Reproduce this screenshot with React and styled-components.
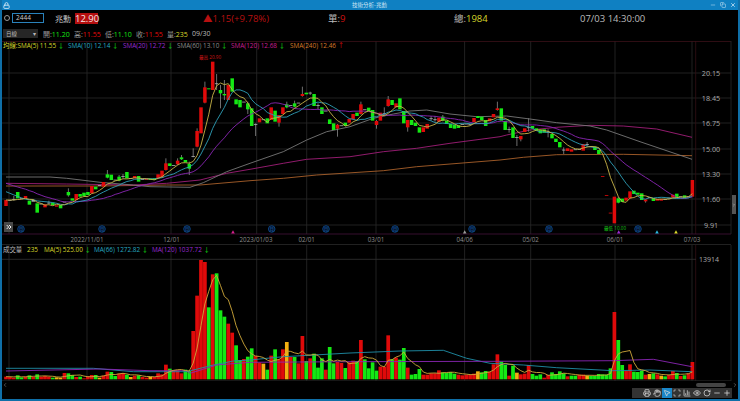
import React from 'react';
import styled, { createGlobalStyle } from 'styled-components';
import { Printer, Hand, MousePointer2, Scan, ChartColumn, Eye, RotateCw, Minus, Plus, Lock, ChevronLeft, ChevronRight, ChevronsRight, X, Copy } from 'lucide-react';

const GlobalStyle = createGlobalStyle`
  html, body {
    margin: 0;
    padding: 0;
    background: #000;
    overflow: hidden;
  }
  * { box-sizing: border-box; }
`;

const RED = '#e00a0a';
const GREEN = '#14e814';
const YELLOW = '#d6d62a';
const FONT = '"Open Sans", "Noto Sans CJK TC", sans-serif';

const Win = styled.div`
  width: 740px;
  height: 401px;
  display: flex;
  flex-direction: column;
  background: #000;
  border: solid #0f6fa8;
  border-width: 0 2px 2px 2px;
  font-family: ${FONT};
  color: #bbb;
  overflow: hidden;
`;

const TitleBar = styled.div`
  height: 10px;
  flex: none;
  margin: 0 -2px;
  padding: 0 4px 0 3px;
  display: grid;
  grid-template-columns: 1fr auto 1fr;
  align-items: center;
  background: #0f80c2;
  color: #cfe6f5;
  font-size: 5.5px;
`;

const WinButtons = styled.div`
  display: flex;
  justify-content: flex-end;
  gap: 4px;
  color: #cfe6f5;
`;

const HeadRow = styled.div`
  height: 16px;
  flex: none;
  display: flex;
  align-items: center;
  font-size: 10px;
  position: relative;
`;

const SearchDot = styled.span`
  width: 6px;
  height: 6px;
  margin: 0 2px 0 2px;
  border: 1px solid #999;
  border-radius: 50%;
`;

const CodeBox = styled.div`
  width: 32px;
  height: 10px;
  padding-left: 3px;
  border: 1px solid #2a82bb;
  font-size: 6.5px;
  line-height: 8px;
  color: #ccc;
`;

const Name = styled.span`
  margin-left: 11px;
  width: 20px;
  font-size: 8px;
  color: #c4c4c4;
`;

const PriceTag = styled.span`
  width: 23px;
  height: 11px;
  background: #b40f0f;
  color: #f4e6e6;
  line-height: 11px;
  text-align: center;
  font-size: 9.5px;
`;

const HeadCell = styled.span`
  width: ${p => p.$w}px;
  color: ${p => p.$c || '#bbb'};
  white-space: nowrap;
  font-size: 9.5px;
`;

const InfoRow = styled.div`
  height: 15px;
  flex: none;
  display: flex;
  align-items: center;
  padding-left: 1px;
  font-size: 7px;
`;

const PeriodSelect = styled.div`
  width: 35px;
  height: 9px;
  margin-right: 5px;
  padding: 0 2px 0 3px;
  display: flex;
  align-items: center;
  justify-content: space-between;
  background: #262626;
  color: #bbb;
  font-size: 5.5px;
`;

const Stat = styled.span`
  width: ${p => p.$w || 31}px;
  color: #999;
  white-space: nowrap;
  b {
    font-weight: 400;
    color: ${p => p.$c};
  }
`;

const Panel = styled.div`
  position: relative;
  flex: none;
  height: ${p => p.$h}px;
`;

const Graph = styled.svg`
  display: block;
  width: 736px;
  height: 100%;
  font-family: ${FONT};
`;

const Legend = styled.div`
  position: absolute;
  top: 0;
  left: 1px;
  height: 9px;
  display: flex;
  align-items: center;
  font-size: 6.4px;
  white-space: nowrap;
`;

const LegendItem = styled.span`
  width: ${p => p.$w}px;
  color: ${p => p.$c};
  i {
    font-style: normal;
    color: ${p => p.$a || GREEN};
  }
`;

const ScrollRow = styled.div`
  height: 7px;
  flex: none;
  display: flex;
  align-items: center;
  justify-content: space-between;
  color: #999;
`;

const ScrollThumb = styled.span`
  width: 30px;
  height: 4px;
  margin-left: auto;
  margin-right: 6px;
  border-radius: 2px;
  background: #444;
`;

const Footer = styled.div`
  height: 11px;
  flex: none;
  display: flex;
  justify-content: flex-end;
  padding: 0 6px 1px 0;
`;

const Tools = styled.div`
  display: flex;
  background: #333;
`;

const ToolBtn = styled.span`
  width: 10px;
  height: 10px;
  display: flex;
  align-items: center;
  justify-content: center;
  color: #ddd;
  background: ${p => (p.$on ? '#1a86c8' : 'transparent')};
`;

const SideHandle = styled.div`
  position: absolute;
  right: 2px;
  top: 154px;
  width: 4px;
  height: 19px;
  display: flex;
  align-items: center;
  justify-content: center;
  background: #555;
  color: #ccc;
`;

const SkipButton = styled.div`
  position: absolute;
  left: 2px;
  top: 181px;
  width: 9px;
  height: 10px;
  display: flex;
  align-items: center;
  justify-content: center;
  background: #4a4a4a;
  color: #eee;
`;

// r/g/d, top, bottom, wick top, wick bottom, all read off the reference as 3x pixels (y = 50 + v / 3)
const candles = [
  ['r',450,468],['d',450,452],['d',448,450,438,452],['g',426,445],['d',445,447],['r',438,445],['g',452,464],['d',450,455],
  ['g',460,488],['d',461,463],['r',463,472],['d',458,460,452,462],['g',458,465],['r',466,470],['g',465,475],['d',455,457],
  ['g',426,436,415,440],['g',445,452],['r',432,450],['g',432,440],['g',428,438],['g',426,435],['r',408,430],['g',410,418],
  ['d',405,407],['r',396,410],['g',373,383,360,385],['g',374,390],['d',389,391],['g',380,392,375,394],['d',378,380,372,385],['g',366,385],
  ['d',384,386],['r',378,385],['g',378,395],['d',387,389],['r',386,390],['g',386,390],['g',385,390],['r',373,385],
  ['r',362,383],['r',340,360,325,362],['g',340,348],['d',345,347],['r',332,343,325,345],['g',322,328,315,330],['g',330,337],['g',342,356,335,375],
  ['d',318,320,295,322],['r',243,290,235,292],['r',172,250],['r',112,158,95,160],['g',115,118],['r',35,120],['d',100,102,72,120],['g',120,130,105,175],
  ['g',132,136,90,150],['r',105,150],['g',85,125],['g',148,163],['g',150,172],['d',155,157],['g',160,178,155,192],['g',175,228],
  ['d',222,224,220,258],['r',205,217],['d',208,210],['g',205,220],['r',172,210],['g',182,215],['r',195,218,195,230],['r',172,192],
  ['g',163,172,155,175],['d',165,167],['g',160,170,152,172],['d',158,160],['r',132,138,110,140],['g',128,133],['d',128,130,125,135],['g',132,168],
  ['d',165,167,160,178],['g',172,192],['d',182,184],['g',208,222],['g',220,240],['r',224,236,222,260],['d',226,228],['g',218,228],
  ['r',207,218],['r',192,208],['g',188,198],['r',163,192,155,194],['d',178,180],['g',173,183],['g',180,212],['r',213,225,210,236],
  ['r',188,212],['d',190,192,172,195],['r',148,168,138,170],['g',150,165],['r',160,172],['g',145,178],['g',183,220],['r',210,232,210,245],
  ['g',210,225],['g',218,228],['g',232,248],['r',232,246],['r',222,236],['d',205,207,198,212],['d',208,210,198,215],['r',203,215],
  ['g',200,212,195,214],['g',212,222],['g',222,234],['g',224,236],['g',226,234],['d',222,224],['d',221,223],['d',222,224],
  ['r',204,216],['g',198,204],['g',200,210],['g',210,228],['r',205,214],['r',192,202],['r',175,180,155,182],['g',175,212],
  ['g',213,240],['d',237,239,230,248],['g',232,264],['d',261,263,255,288],['r',258,268,258,274],['r',235,246],['d',232,234,205,245],['g',228,236],
  ['g',235,242],['g',240,250],['g',238,248],['d',245,247,238,262],['g',252,265],['g',266,276],['g',276,292],['d',299,301,292,312],
  ['r',295,303],['r',298,305],['d',298,300],['d',297,299],['r',282,302],['d',282,284,276,290],['d',289,291],['g',290,300],
  ['g',300,312],['x',378,380],['x',435,437],['x',488,490],['r',440,520],['g',445,458,440,460],['g',446,456],['r',443,452],
  ['r',424,445],['g',422,432],['g',428,434],['g',430,450],['r',448,454,448,458],['d',442,444],['g',445,453],['r',447,452],
  ['r',447,452],['d',447,449],['d',443,445],['r',434,443],['g',431,443],['d',439,441],['g',436,445],['d',439,441],['r',390,440],
];

const BAR = { r: RED, g: GREEN, y: '#f2b010' };
const volume = [
  'r455','r456','r458','g451','g457','r455','g451','r456','g448','r455','r453','r455','g458','y457','y458','r444',
  'g445','g450','r456','g455','r460','r454','r450','g450','y458','r452','r440','g441','g453','r446','r444','g449',
  'y456','r452','g451','r456','r458','y456','r456','r445','r448','r419','g431','r436','r436','r445','g434','g438',
  'r318','r212','r105','r111','g247','r148','g145','g256','g275','r296','r323','g361','g405','r402','g395','g370',
  'r393','r413','y416','g434','r392','g373','r403','r373','y351','r396','g396','r415','r333','g408','r400','g386',
  'g428','g400','r434','g366','g415','r411','r414','g429','r412','r407','g408','r345','g403','g430','g412','g437',
  'r425','r425','r331','g403','r398','g404','g369','r428','g449','g447','g432','r449','r449','r445','r445','r436',
  'g442','g444','g441','g446','r449','r451','r449','r449','r446','y439','g442','g438','r440','r418','r388','g410',
  'g420','r452','g422','y443','r448','r446','r420','g447','g452','g448','r458','r450','g442','g447','g439','g445',
  'r454','g452','g452','r449','r449','y452','g453','g453','g447','g448','g449','g430','r261','g345','g420','r438',
  'r418','g440','g441','g437','r449','y447','g445','r448','y452','g454','r450','r438','g444','r453','g451','r445','r411',
];

const barX = i => 6 + 3.9 * i;
const mainY = v => 50 + v / 3;
const volY = v => 225 + v / 3;
const BASE = 463;

const closes = candles.map(c => (c[0] === 'g' ? c[2] : c[1]));
const priceHistory = [...Array(10).fill(375), ...Array(5).fill(400), ...Array(4).fill(450)];

const sma = (values, n, history) => {
  const all = [...history, ...values];
  const start = history.length;
  return values.map((_, i) => {
    const win = all.slice(Math.max(0, i + start - n + 1), i + start + 1);
    return win.reduce((a, b) => a + b, 0) / win.length;
  });
};

const toPoints = (values, toY) => values.map((v, i) => `${barX(i).toFixed(1)},${toY(v).toFixed(1)}`).join(' ');

// hand traced lines: [3x crop x offset, [x, y, x, y ...]]
const traced = (parts, toY) =>
  parts
    .map(([off, list]) => {
      const out = [];
      for (let i = 0; i < list.length; i += 2) out.push(`${(off + list[i] / 3).toFixed(1)},${toY(list[i + 1]).toFixed(1)}`);
      return out.join(' ');
    })
    .join(' ');

const sma60 = traced([
  [0, [18,381,150,381,200,385,300,397,400,405,450,410,570,412,610,398,680,365]],
  [250, [0,340,100,305,170,270,230,245,300,230,370,205,430,192,480,183,530,180,600,192,680,200]],
  [490, [50,198,120,207,200,218,300,228,350,240,450,275,606,328]],
], mainY);
const sma120 = traced([
  [0, [18,400,200,402,400,405,500,400,600,390,680,370]],
  [250, [0,358,100,340,170,328,300,320,400,305,500,295,600,280,750,260]],
  [490, [50,255,120,240,200,232,300,226,400,228,500,237,606,262]],
], mainY);
const sma240 = traced([
  [0, [18,408,300,408,500,405,600,405,750,392]],
  [250, [100,385,200,375,400,362,500,350,750,330]],
  [490, [100,322,200,314,400,313,606,317]],
], mainY);
const vol66 = traced([
  [0, [18,430,280,430,400,440,560,440,640,420,700,408]],
  [250, [0,405,100,395,300,384,450,378,580,376,650,400,720,415]],
  [490, [100,420,200,428,370,437,480,435,606,440]],
], volY);
const vol120 = traced([
  [0, [18,438,300,432,450,437,560,437,570,445,650,420,750,412]],
  [250, [300,410,750,409]],
  [490, [370,407,490,403,606,425]],
], volY);

const priceLevels = [[73,'20.15'],[98,'18.45'],[123,'16.75'],[149,'15.00'],[174,'13.30'],[199,'11.60'],[225,'9.91']];
const gridX = [9, 87, 171, 256.7, 306.7, 376, 464.6, 530.7, 615, 692, 695.7];
const dates = [[87,'2022/11/01'],[171.5,'12/01'],[256,'2023/01/03'],[306.7,'02/01'],[376,'03/01'],[464.7,'04/06'],[530.7,'05/02'],[615,'06/01'],[692,'07/03']];
const circles = [21, 102, 187, 271.7, 326, 395, 472, 549, 638];
const triangles = [[233,'#d4208c'],[464.7,'#999'],[618.7,'#9a2ad0'],[657,'#2ab8e0'],[676,'#d8d82a']];

const Candle = ({ c, i }) => {
  const [kind, top, bot, wt, wb] = c;
  const x = barX(i);
  const color = kind === 'r' || kind === 'x' ? RED : kind === 'g' ? GREEN : '#b0b0b0';
  return (
    <g>
      {wt !== undefined && <line x1={x} x2={x} y1={mainY(wt)} y2={mainY(wb)} stroke="#8a8a8a" strokeWidth="0.8" />}
      <rect x={x - 1.75} width="3.5" y={mainY(top)} height={Math.max(0.8, (bot - top) / 3)} fill={color} />
    </g>
  );
};

const PriceChart = () => (
  <Graph viewBox="2 41 736 204" preserveAspectRatio="none">
    {priceLevels.map(([y]) => <line key={y} x1="2" x2="731" y1={y} y2={y} stroke="#2a2a2a" strokeWidth="0.8" />)}
    {gridX.map(x => <line key={x} x1={x} x2={x} y1="41" y2="234" stroke={x > 695 ? '#331015' : '#2a2a2a'} strokeWidth="0.8" />)}
    <line x1="2" x2="731" y1="41.5" y2="41.5" stroke="#3a1018" strokeWidth="0.8" />
    <line x1="2" x2="731" y1="234" y2="234" stroke="#45123a" strokeWidth="0.8" />
    <line x1="731" x2="731" y1="41" y2="234" stroke="#2a2a2a" strokeWidth="0.8" />
    <line x1="2" x2="731" y1="244.5" y2="244.5" stroke="#2a2a2a" strokeWidth="0.8" />

    <polyline points={sma240} fill="none" stroke="#a8602a" strokeWidth="0.9" />
    <polyline points={sma120} fill="none" stroke="#a01e78" strokeWidth="0.9" />
    <polyline points={sma60} fill="none" stroke="#777" strokeWidth="0.9" />
    {candles.map((c, i) => <Candle key={i} c={c} i={i} />)}
    <polyline points={toPoints(sma(closes, 20, priceHistory), mainY)} fill="none" stroke="#8a26b4" strokeWidth="0.9" />
    <polyline points={toPoints(sma(closes, 10, priceHistory), mainY)} fill="none" stroke="#2f9fb8" strokeWidth="0.9" />
    <polyline points={toPoints(sma(closes, 5, priceHistory), mainY)} fill="none" stroke="#c8b448" strokeWidth="0.9" />

    <text x="210" y="58.5" fontSize="4.6" fill="#d01515" textAnchor="middle">最高 20.90</text>
    <text x="615" y="229.5" fontSize="4.6" fill="#18c018" textAnchor="middle">最低 10.00</text>

    {circles.map(x => (
      <g key={x}>
        <circle cx={x} cy="229" r="3.3" fill="#04122a" stroke="#0e4f96" strokeWidth="0.8" />
        <text x={x} y="230.8" fontSize="4.6" fill="#1a68b8" textAnchor="middle">月</text>
      </g>
    ))}
    {triangles.map(([x, c]) => <polygon key={x} points={`${x - 1.8},233.5 ${x + 1.8},233.5 ${x},230.3`} fill={c} />)}

    {priceLevels.map(([y, t]) => <text key={t} x="711" y={y + 2.6} fontSize="7.2" fill="#aaa" textAnchor="middle">{t}</text>)}
    {dates.map(([x, t]) => <text key={t} x={x} y="241.5" fontSize="6.2" fill="#8c8c8c" textAnchor="middle">{t}</text>)}
  </Graph>
);

const VolumeChart = () => {
  const tops = volume.map(v => Number(v.slice(1)));
  return (
    <Graph viewBox="2 245 736 136" preserveAspectRatio="none">
      {gridX.map(x => <line key={x} x1={x} x2={x} y1="245" y2="381" stroke={x > 695 ? '#331015' : '#2a2a2a'} strokeWidth="0.8" />)}
      <line x1="2" x2="696" y1="259.3" y2="259.3" stroke="#333" strokeWidth="0.8" />
      <line x1="731" x2="731" y1="245" y2="381" stroke="#2a2a2a" strokeWidth="0.8" />
      <line x1="2" x2="731" y1="380.8" y2="380.8" stroke="#2a2a2a" strokeWidth="0.8" />
      {volume.map((v, i) => (
        <rect key={i} x={barX(i) - 1.85} width="3.7" y={volY(tops[i])} height={(BASE - tops[i]) / 3} fill={BAR[v[0]]} />
      ))}
      <polyline points={vol66} fill="none" stroke="#1f8fa8" strokeWidth="0.9" />
      <polyline points={vol120} fill="none" stroke="#8a26b4" strokeWidth="0.9" />
      <polyline points={toPoints(sma(tops, 5, [455, 455, 455, 455]), volY)} fill="none" stroke="#d0a83a" strokeWidth="0.9" />
      <text x="709" y="262" fontSize="7" fill="#aaa" textAnchor="middle">13914</text>
    </Graph>
  );
};

const tools = [null, Printer, Hand, MousePointer2, Scan, ChartColumn, Eye, RotateCw, Minus, Plus];

export default function App() {
  return (
    <>
      <GlobalStyle />
      <Win>
        <TitleBar>
          <Lock size={7} strokeWidth={3} />
          <span>技術分析-兆勳</span>
          <WinButtons>
            <Minus size={6} strokeWidth={2} />
            <Copy size={6} strokeWidth={2} />
            <X size={6} strokeWidth={3} />
          </WinButtons>
        </TitleBar>
        <HeadRow>
          <SearchDot />
          <CodeBox>2444</CodeBox>
          <Name>兆勳</Name>
          <PriceTag>12.90</PriceTag>
          <HeadCell $w={105} />
          <HeadCell $w={125} $c="#b81010">▲1.15(+9.78%)</HeadCell>
          <HeadCell $w={126}>單:<HeadCell $c="#d01010">9</HeadCell></HeadCell>
          <HeadCell $w={126}>總:<HeadCell $c={YELLOW}>1984</HeadCell></HeadCell>
          <HeadCell $w={70}>07/03 14:30:00</HeadCell>
        </HeadRow>
        <InfoRow>
          <PeriodSelect>日線<span>▾</span></PeriodSelect>
          <Stat $c={GREEN}>開:<b>11.20</b></Stat>
          <Stat $c={RED}>高:<b>11.55</b></Stat>
          <Stat $c={GREEN}>低:<b>11.10</b></Stat>
          <Stat $c={RED}>收:<b>11.55</b></Stat>
          <Stat $w={25} $c={YELLOW}>量:<b>235</b></Stat>
          <Stat $c="#bbb"><b>09/30</b></Stat>
        </InfoRow>
        <Panel $h={204}>
          <PriceChart />
          <Legend>
            <LegendItem $w={65} $c={YELLOW}>均線:SMA(5) 11.55 <i>↓</i></LegendItem>
            <LegendItem $w={55} $c="#26a8c0">SMA(10) 12.14 <i>↓</i></LegendItem>
            <LegendItem $w={54} $c="#9a2ad0">SMA(20) 12.72 <i>↓</i></LegendItem>
            <LegendItem $w={54} $c="#8c8c8c">SMA(60) 13.10 <i>↓</i></LegendItem>
            <LegendItem $w={59} $c="#c81e90">SMA(120) 12.68 <i>↓</i></LegendItem>
            <LegendItem $w={55} $c="#d87a28" $a={RED}>SMA(240) 12.46 <i>↑</i></LegendItem>
          </Legend>
          <SkipButton><ChevronsRight size={8} strokeWidth={3} /></SkipButton>
          <SideHandle><ChevronRight size={4} strokeWidth={3} /></SideHandle>
        </Panel>
        <Panel $h={136}>
          <VolumeChart />
          <Legend>
            <LegendItem $w={24} $c="#bbb">成交量</LegendItem>
            <LegendItem $w={17} $c={YELLOW}>235</LegendItem>
            <LegendItem $w={50} $c={YELLOW}>MA(5) 525.00 <i>↓</i></LegendItem>
            <LegendItem $w={58} $c="#26a8c0">MA(66) 1272.82 <i>↓</i></LegendItem>
            <LegendItem $w={60} $c="#9a2ad0">MA(120) 1037.72 <i>↓</i></LegendItem>
          </Legend>
        </Panel>
        <ScrollRow>
          <ChevronLeft size={6} />
          <ScrollThumb />
          <ChevronRight size={6} />
        </ScrollRow>
        <Footer>
          <Tools>
            {tools.map((Icon, i) => (
              <ToolBtn key={i} $on={i === 3}>{Icon && <Icon size={8} strokeWidth={2.2} />}</ToolBtn>
            ))}
          </Tools>
        </Footer>
      </Win>
    </>
  );
}
